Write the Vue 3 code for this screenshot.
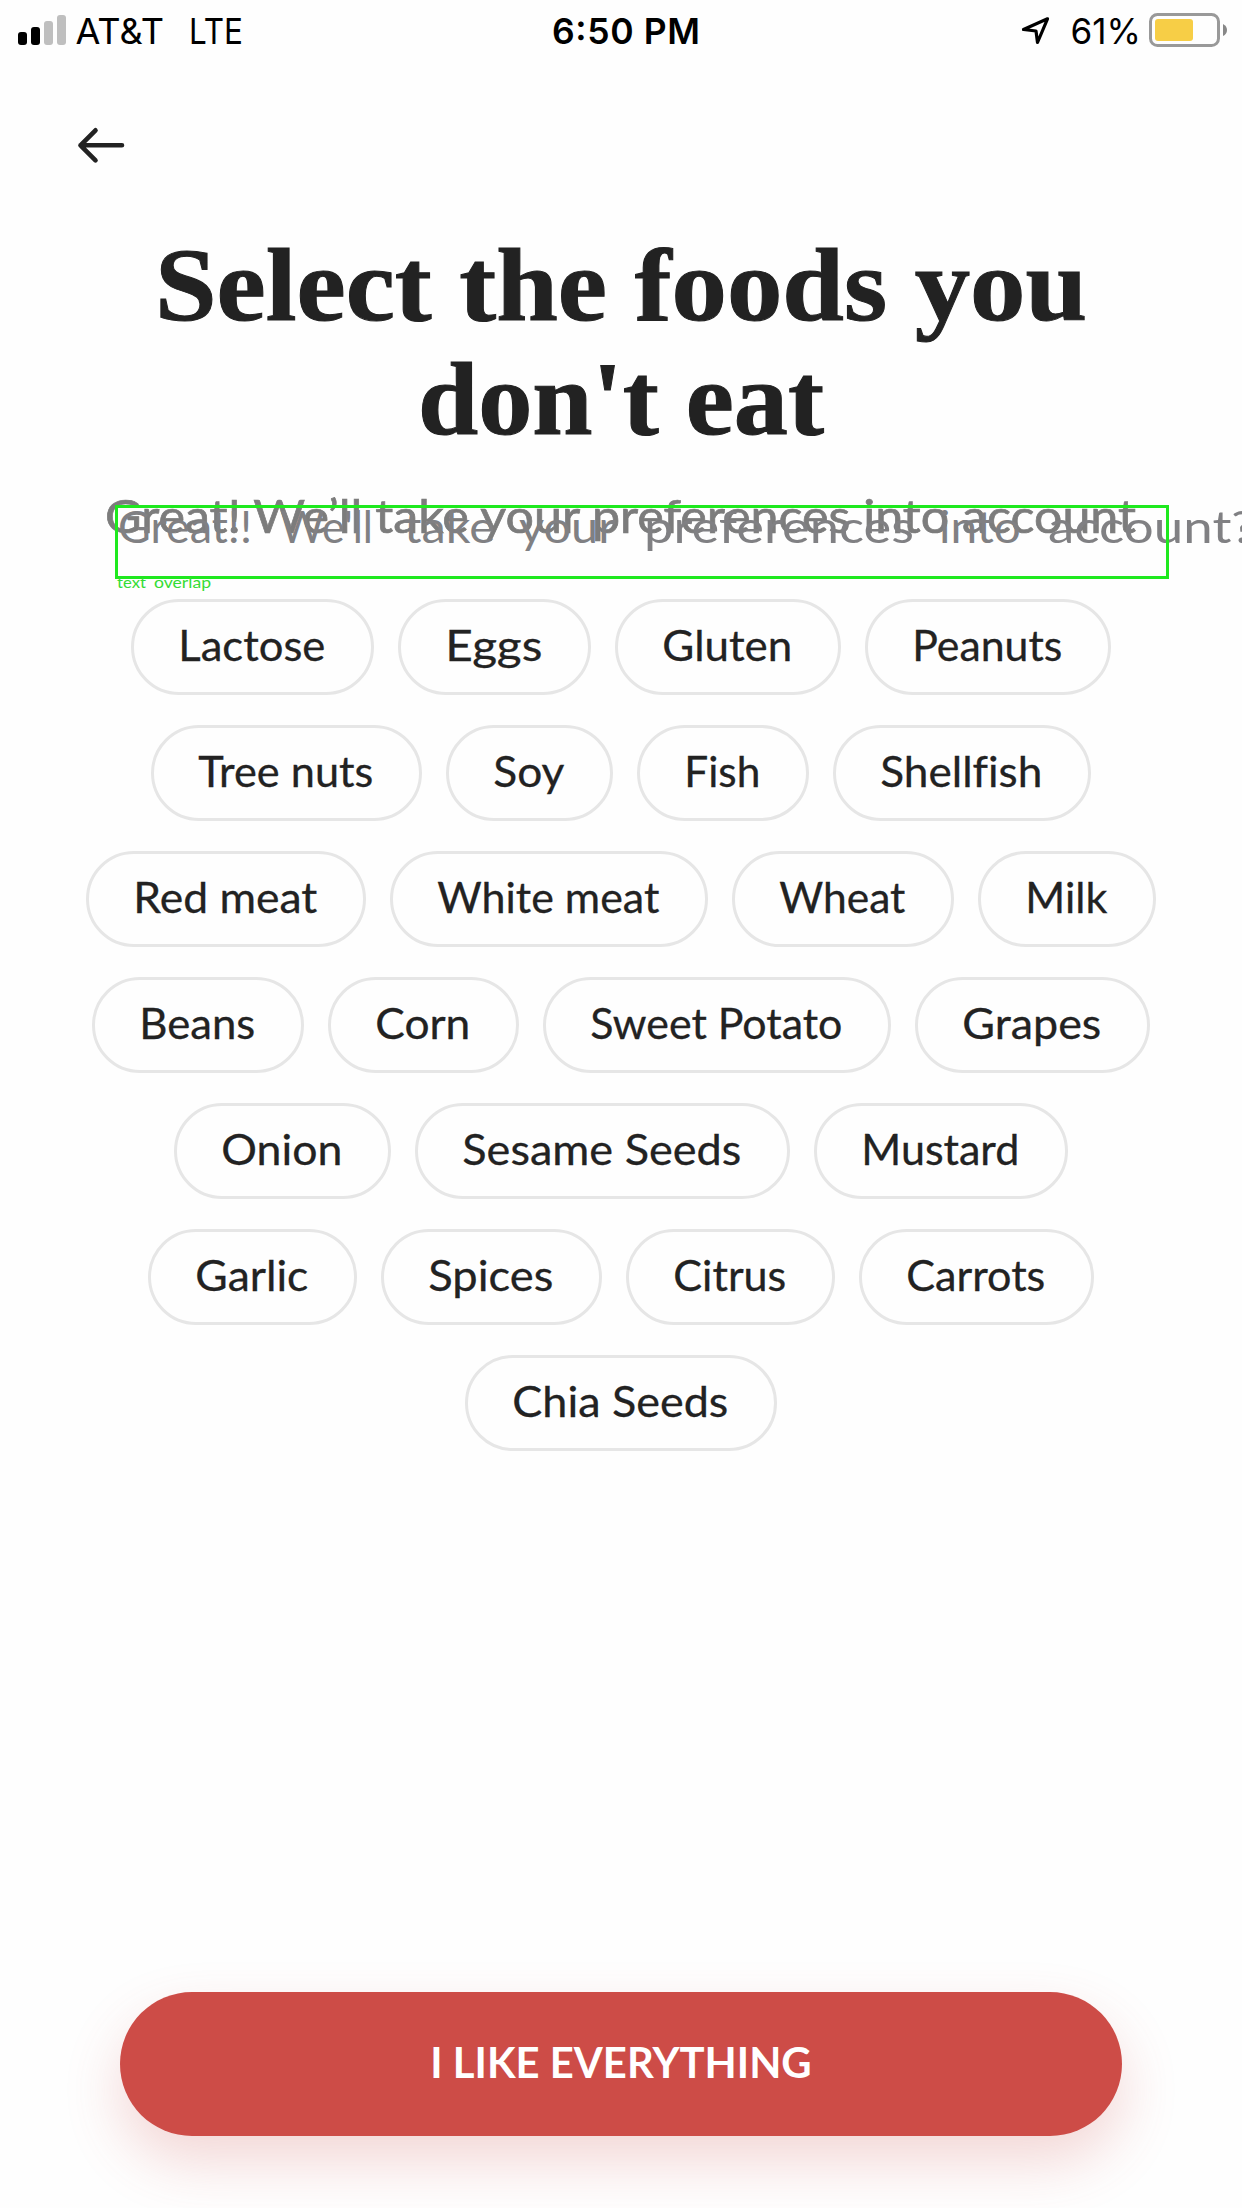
<script setup>
const rows = [
  [['Lactose', 243], ['Eggs', 193], ['Gluten', 226], ['Peanuts', 246]],
  [['Tree nuts', 271], ['Soy', 167], ['Fish', 172], ['Shellfish', 258]],
  [['Red meat', 280], ['White meat', 318], ['Wheat', 222], ['Milk', 178]],
  [['Beans', 212], ['Corn', 191], ['Sweet Potato', 348], ['Grapes', 235]],
  [['Onion', 217], ['Sesame Seeds', 375], ['Mustard', 254]],
  [['Garlic', 209], ['Spices', 221], ['Citrus', 209], ['Carrots', 235]],
  [['Chia Seeds', 312]],
]
const words = [
  ['Great!!', 118, 134],
  ["We'll", 280, 93],
  ['take', 404, 91],
  ['your', 519, 97],
  ['preferences', 644, 270],
  ['into', 939, 82],
  ['account?', 1048, 207],
]
</script>

<template>
  <main class="screen">
    <header class="status">
      <svg width="1242" height="64" viewBox="0 0 1242 64">
        <rect x="18" y="32" width="9" height="13" rx="3" />
        <rect x="31" y="27" width="9" height="18" rx="3" />
        <rect x="44" y="21" width="9" height="24" rx="3" fill="#bfbfbf" />
        <rect x="57" y="15" width="9" height="30" rx="3" fill="#bfbfbf" />
        <text x="75.500" y="44" font-size="36" textLength="88.500" lengthAdjust="spacingAndGlyphs">AT&amp;T</text>
        <text x="189" y="44" font-size="36" textLength="54" lengthAdjust="spacingAndGlyphs">LTE</text>
        <text x="552" y="44" font-size="35.500" font-weight="600" textLength="148" lengthAdjust="spacing">6:50 PM</text>
        <path d="M1047.500 18.800 L1023.500 29.500 L1036 31 L1037.500 42.500 Z" fill="none" stroke="#000" stroke-width="3.200" stroke-linejoin="round" />
        <text x="1070.500" y="44" font-size="36" textLength="70.500" lengthAdjust="spacingAndGlyphs">61%</text>
        <rect x="1150.500" y="14.500" width="68" height="31" rx="7" fill="none" stroke="#999" stroke-width="3" />
        <rect x="1155" y="19" width="38" height="22" rx="3" fill="#f7ce46" />
        <path d="M1223 24 Q1227 26 1227 30 Q1227 34 1223 36 Z" fill="#888" />
      </svg>
    </header>
    <nav class="nav">
      <svg width="50" height="40" viewBox="0 0 50 40" fill="none" stroke="#222" stroke-width="4.600" stroke-linecap="round" stroke-linejoin="round">
        <path d="M47 20.300 H5.500 M20.500 5.300 L5.500 20.300 L20.500 35.300" />
      </svg>
    </nav>
    <h1 class="title">
      <svg width="1242" height="240" viewBox="0 0 1242 240">
        <text x="155" y="100.300" textLength="932" lengthAdjust="spacingAndGlyphs">Select the foods you</text>
        <text x="418" y="214.300" textLength="406" lengthAdjust="spacingAndGlyphs">don't eat</text>
      </svg>
    </h1>
    <section class="intro">
      <svg width="1242" height="139" viewBox="0 0 1242 139">
        <text class="lead" x="105" y="73" textLength="1031" lengthAdjust="spacingAndGlyphs">Great! We’ll take your preferences into account</text>
        <text v-for="[word, x, w] in words" :key="word" class="ghost" :x="x" y="82.500" :textLength="w" lengthAdjust="spacingAndGlyphs">{{ word }}</text>
        <rect x="116.500" y="46.500" width="1051" height="71" fill="none" stroke="#1ee91e" stroke-width="3" />
        <text class="tag" x="117" y="128" textLength="29" lengthAdjust="spacingAndGlyphs">text</text>
        <text class="tag" x="154" y="128" textLength="57" lengthAdjust="spacingAndGlyphs">overlap</text>
      </svg>
    </section>
    <section class="foods">
      <div v-for="(row, i) in rows" :key="i" class="row">
        <button v-for="[name, width] in row" :key="name" class="chip" :style="{ width: width + 'px' }">
          <svg :width="width - 6" height="90">
            <text x="44.300" y="58.700" :textLength="width - 96" lengthAdjust="spacingAndGlyphs">{{ name }}</text>
          </svg>
        </button>
      </div>
    </section>
    <footer class="footer">
      <button class="cta">I LIKE EVERYTHING</button>
    </footer>
  </main>
</template>

<style>
body { margin: 0; background: #fefefe; }
</style>

<style scoped>
.screen {
  display: flex;
  flex-direction: column;
  width: 1242px;
  height: 2208px;
  overflow: hidden;
  background: #fefefe;
  color: #222;
}
svg { display: block; }
.status { height: 64px; font-family: Inter, "Liberation Sans", sans-serif; }
.nav { height: 156px; padding: 61px 0 0 75px; box-sizing: border-box; }
.title { margin: 0; height: 240px; }
.title text { font: 700 103.5px "Liberation Serif", serif; fill: #222; stroke: #222; stroke-width: 1px; }
.intro { height: 139px; font-family: Lato, sans-serif; }
.lead { font-size: 46px; fill: #7c7c7c; stroke: #7c7c7c; stroke-width: 0.7px; }
.ghost { font-size: 45px; fill: #808083; }
.tag { font-size: 16px; font-weight: 400; fill: #35dc35; }
.foods { display: flex; flex-direction: column; gap: 30px; flex: 1; }
.row { display: flex; justify-content: center; gap: 24px; }
.chip {
  box-sizing: border-box;
  height: 96px;
  padding: 0;
  border: 3px solid #e6e6e6;
  border-radius: 48px;
  background: #fefefe;
  white-space: nowrap;
}
.chip text { font: 400 42px Lato, sans-serif; font-variant-ligatures: none; fill: #222; stroke: #222; stroke-width: 0.3px; }
.footer { display: flex; justify-content: center; height: 216px; }
.cta {
  width: 1002px;
  height: 144px;
  padding: 0 0 4px;
  border: 0;
  border-radius: 72px;
  background: #cd4c47;
  box-shadow: 0 26px 56px rgba(205, 76, 71, 0.22);
  color: #fff;
  font: 700 41.8px Lato, sans-serif;
}
</style>
